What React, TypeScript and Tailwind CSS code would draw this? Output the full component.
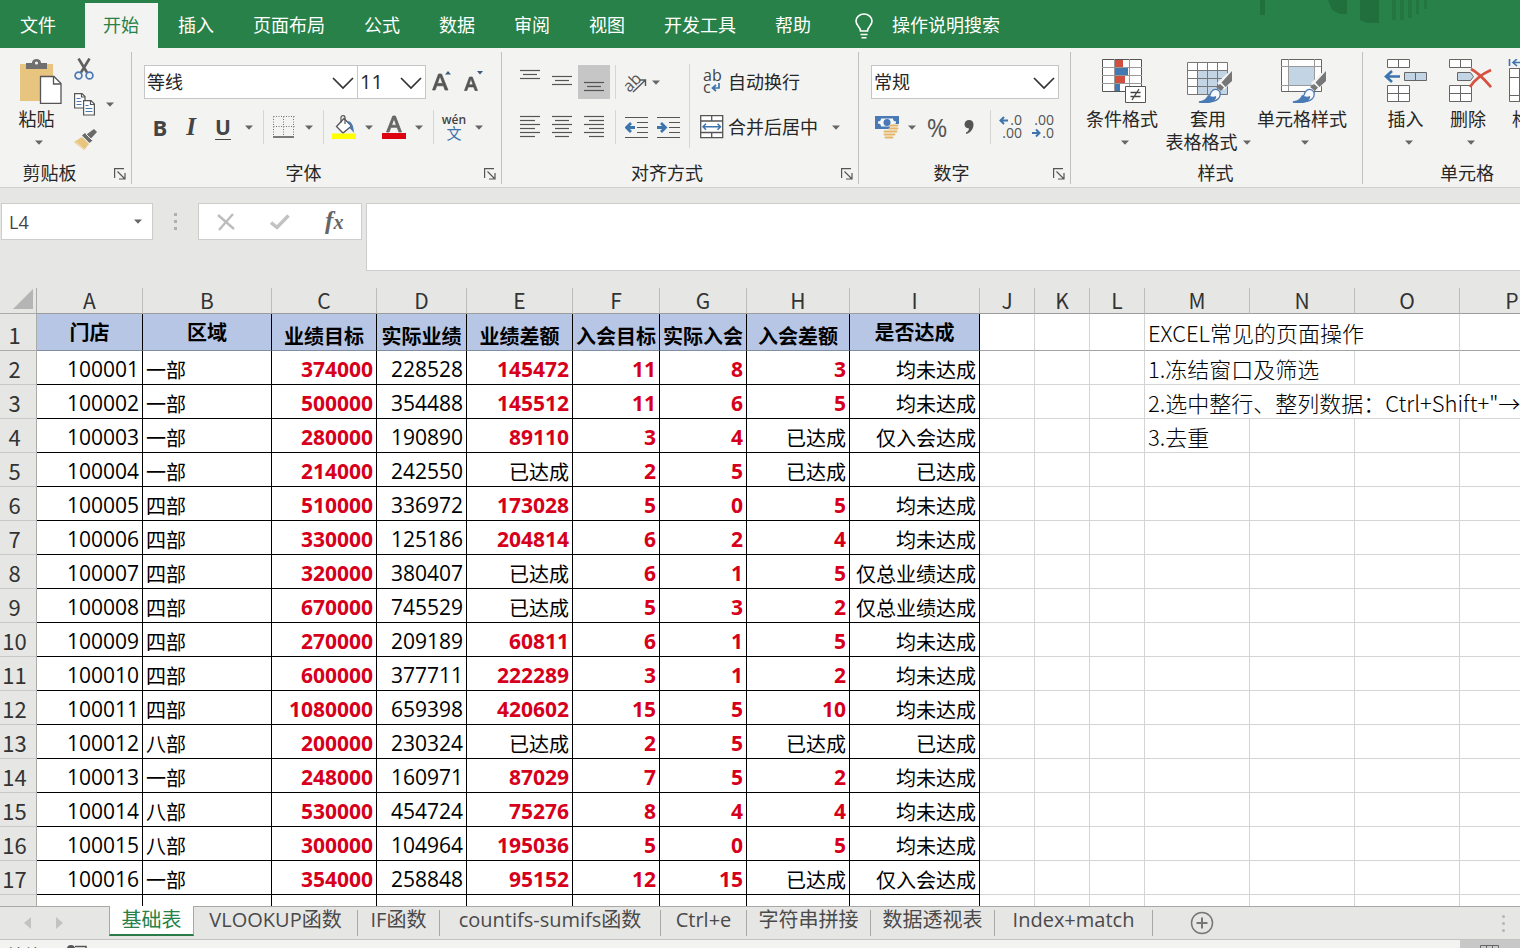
import React from "react";

const UI = "font-['Open_Sans','Noto_Sans_CJK_SC',sans-serif]";
const HEADING = "font-['Noto_Sans_CJK_SC',sans-serif] font-normal";
const LIGHT = "font-['Noto_Sans_CJK_SC',sans-serif] font-light";

function Caret({ className = "" }: { className?: string }) {
  return (
    <svg width="8" height="5" viewBox="0 0 8 5" className={"shrink-0 " + className} aria-hidden="true">
      <path d="M0 0.5h8L4 4.8z" fill="#666" />
    </svg>
  );
}

function CaretButton({ label }: { label: string }) {
  return (
    <button aria-label={label} className="flex h-8 w-[18px] items-center justify-center">
      <Caret />
    </button>
  );
}

function Tool({ label, active, children }: { label: string; active?: boolean; children: React.ReactNode }) {
  return (
    <button aria-label={label} className={"flex h-[34px] w-8 shrink-0 items-center justify-center " + (active ? "bg-[#c6c6c6]" : "")}>
      {children}
    </button>
  );
}

function Sep() {
  return (
    <span className="flex w-[10px] shrink-0 justify-center self-stretch">
      <span className="w-px bg-[#d6d6d6]" />
    </span>
  );
}

function Launcher({ label }: { label: string }) {
  return (
    <button aria-label={label} className="absolute right-[5px] bottom-1">
      <svg width="12" height="12" viewBox="0 0 12 12" fill="none" stroke="#555" strokeWidth="1.2">
        <path d="M0.6 10V0.6H10M3.5 3.5l7 7M11 5v6H5" />
      </svg>
    </button>
  );
}

function Group({ title, width, titlePad = "", launcher, last, children }: { title: string; width: string; titlePad?: string; launcher?: boolean; last?: boolean; children: React.ReactNode }) {
  return (
    <section aria-label={title} className={"relative mt-1 mb-[3px] flex shrink-0 flex-col " + width + (last ? "" : " border-r border-[#c0c0c0]")}>
      <div className="flex h-[108px] items-start">{children}</div>
      <div className={"h-6 text-center leading-[26px] " + titlePad}>{title}</div>
      {launcher && <Launcher label={title + "设置"} />}
    </section>
  );
}

function Combo({ label, value, width }: { label: string; value: string; width: string }) {
  return (
    <label className={"relative block h-[34px] border border-[#c6c6c6] bg-white " + width}>
      <select aria-label={label} defaultValue={value} className="h-full w-full appearance-none bg-transparent pl-[2px] outline-none">
        <option>{value}</option>
      </select>
      <svg width="22" height="13" viewBox="0 0 22 13" className="pointer-events-none absolute top-[11px] right-[3px]" fill="none" stroke="#333" strokeWidth="1.7">
        <path d="M1 1l10 10L21 1" />
      </svg>
    </label>
  );
}

function BigButton({ label, second, width, children }: { label: string; second?: string; width: string; children: React.ReactNode }) {
  return (
    <button className={"flex shrink-0 flex-col items-center pt-[7px] leading-[23px] " + width}>
      {children}
      <span className="mt-1 whitespace-nowrap">{label}</span>
      <span className={"flex h-[23px] items-center gap-[5px] whitespace-nowrap " + (second ? "" : "pl-[6px]")}>
        {second && <span>{second}</span>}
        <Caret />
      </span>
    </button>
  );
}

function Lines({ rows }: { rows: [number, number, number][] }) {
  return (
    <svg width="22" height="26" viewBox="0 0 22 26" stroke="#555" strokeWidth="1.2" aria-hidden="true">
      {rows.map(([x1, x2, y]) => (
        <path key={y} d={`M${x1} ${y + 0.5}H${x2}`} />
      ))}
    </svg>
  );
}

const Paste = () => (
  <svg width="42" height="45" viewBox="0 0 42 45">
    <path d="M0 5h33v37H0z" fill="#e8c57f" />
    <path d="M6 10V4h6c0-3 2-4 4.500-4S21 1 21 4h6v6z" fill="#6f6f6f" />
    <circle cx="16.500" cy="4" r="1.600" fill="#f3f3f2" />
    <path d="M20.500 17.500H34l7 7v20H20.500z" fill="#fff" stroke="#555" strokeWidth="1.300" />
    <path d="M33.500 17.500v7.500H41" fill="none" stroke="#555" strokeWidth="1.300" />
  </svg>
);

const Scissors = () => (
  <svg width="20" height="22" viewBox="0 0 20 22" fill="none">
    <path d="M4.500 0.500l8.500 14M15.500 0.500L7 14.500" stroke="#606060" strokeWidth="2.600" />
    <circle cx="4.500" cy="17.500" r="3.400" stroke="#4a7ab5" strokeWidth="1.700" />
    <circle cx="15.500" cy="17.500" r="3.400" stroke="#4a7ab5" strokeWidth="1.700" />
  </svg>
);

const Copy = () => (
  <svg width="21" height="23" viewBox="0 0 21 23" fill="#fff" stroke="#555" strokeWidth="1.200">
    <path d="M0.600 0.600H8l3 3V15H0.600z" />
    <path d="M9.600 7.600H17l3.400 3.400V22H9.600z" />
    <path d="M7.500 0.600V4H11M16.500 7.600V11.500h4" fill="none" />
    <path d="M2.500 5.500h4M2.500 8.500h5M2.500 11.500h5M11.500 12.500h3M11.500 15.500h7M11.500 18.500h7" stroke="#4a7ab5" />
  </svg>
);

const FormatBrush = () => (
  <svg width="23" height="21" viewBox="0 0 23 21">
    <path d="M0 13l8-5 7 7-5 6z" fill="#e8c57f" />
    <path d="M2 13l8 7" stroke="#f3e2bd" strokeWidth="1" />
    <path d="M8 6.500l3-2.500 7.500 7.500-3 2.500z" fill="#6a6a6a" />
    <path d="M12.500 5.500L20 0l3 3-6.500 7z" fill="#6a6a6a" />
    <path d="M12 5l6 6" stroke="#f3f3f2" strokeWidth="1" />
  </svg>
);

const Borders = () => (
  <svg width="22" height="22" viewBox="0 0 22 22" fill="none" stroke="#777">
    <path d="M0.500 0.500h21M0.500 10.500h21M0.500 0.500v20M10.500 0.500v20M20.500 0.500v20" strokeDasharray="1 1.500" />
    <path d="M0 21h21" stroke="#444" strokeWidth="1.400" />
  </svg>
);

const Fill = () => (
  <svg width="24" height="24" viewBox="0 0 24 24" fill="none">
    <path d="M12 3.500l7.500 7.500-8.500 7-6.500-6.500z" fill="#fff" stroke="#555" strokeWidth="1.300" />
    <path d="M9 7.500V2.500c0-2.500 4-2.500 4 0V9" stroke="#555" strokeWidth="1.200" />
    <path d="M15 6c4 0 6.500 3 7 12-1-2-3-3-4.500-5l1.500-2z" fill="#4a7ab5" />
    <path d="M0 18.500h24V24H0z" fill="#ffff00" />
  </svg>
);

const FontColor = () => (
  <svg width="24" height="24" viewBox="0 0 24 24">
    <path d="M4.500 17L10.800 1h2.600L19.500 17h-2.600l-1.700-4.700H8.800L7.100 17zM9.600 10.200h4.800L12 3.500z" fill="#666" stroke="#666" strokeWidth="0.800" />
    <path d="M0 18h24v6H0z" fill="#dd0010" />
  </svg>
);

const Indent = ({ right }: { right?: boolean }) => (
  <svg width="23" height="23" viewBox="0 0 23 23" stroke="#555" strokeWidth="1.200" fill="none">
    <path d="M0 1.500h23M12 6.500h11M12 11.500h11M12 16.500h11M0 21.500h23" />
    <path d={right ? "M0 11.500h8M4 7l4.500 4.500L4 16" : "M10 11.500H2M6 7l-4.500 4.500L6 16"} stroke="#3c74ad" strokeWidth="2.800" />
  </svg>
);

const Orientation = () => (
  <svg width="22" height="22" viewBox="0 0 22 22" className="overflow-visible">
    <text x="-2" y="17" fontSize="16" fill="#555" transform="rotate(-45 7 12)" fontFamily="Open Sans">ab</text>
    <path d="M8 21L20 9.500M14.500 9H20.500V15" fill="none" stroke="#555" strokeWidth="1.400" />
  </svg>
);

const Merge = () => (
  <svg width="24" height="24" viewBox="0 0 24 24" fill="#fff" stroke="#555" strokeWidth="1.300">
    <path d="M0.700 0.700h22v22h-22zM0.700 6h22M0.700 17.500h22M11.700 0.700V6M11.700 17.500v5" />
    <path d="M3 11.700h17.500M6 8.700l-3 3 3 3M17.500 8.700l3 3-3 3" fill="none" stroke="#3c74ad" strokeWidth="1.500" />
  </svg>
);

const Money = () => (
  <svg width="24" height="24" viewBox="0 0 24 24">
    <path d="M0 1h24v13H0z" fill="#4a7ab5" />
    <path d="M6 3.500h12c0 2 1 3 3 3v2c-2 0-3 1-3 3H6c0-2-1-3-3-3v-2c2 0 3-1 3-3z" fill="#f3f6fa" />
    <circle cx="12" cy="7.500" r="3.500" fill="#4a7ab5" />
    <path d="M15 9h9v13H9v-6h6z" fill="#f3f3f2" />
    <path d="M15.500 10.500h7M14.500 13.500h8M9.500 16.500h12M9.500 19.500h10M10.500 22.500h7" stroke="#e6b566" strokeWidth="1.800" strokeLinecap="round" />
  </svg>
);

const Decimals = ({ decrease }: { decrease?: boolean }) => (
  <svg width="24" height="26" viewBox="0 0 24 26" className="overflow-visible" fontFamily="Open Sans" fontSize="14" fill="#555">
    <text x="23" y="11" textAnchor="end">{decrease ? ".00" : ".0"}</text>
    <text x="23" y="24" textAnchor="end">{decrease ? ".0" : ".00"}</text>
    <path d={decrease ? "M1 19h7M5 15.500L8.500 19 5 22.500" : "M9 6.500H2M5 3L1.500 6.500 5 10"} fill="none" stroke="#3c74ad" strokeWidth="2" />
  </svg>
);

const Brush = () => (
  <>
    <path d="M46 9v12L37 31l-7-7z" fill="#f3f3f2" />
    <path d="M45 12v10l-6.500 6-4-4.500zM33 25l4 3.500-3 3.500-5-4z" fill="#777" />
    <path d="M23 36c1-4 4-7 8-5 3 2 3 6 0 9-4 4-12 3-19 3 5-1 9-3 11-7z" fill="#f7f9fb" stroke="#4a7ab5" strokeWidth="1.300" />
    <path d="M21 36c3 2 6 2 8 1 1 3-3 7-8 7H11c5-1 8-4 10-8z" fill="#4a7ab5" />
  </>
);

const Conditional = () => (
  <svg width="44" height="45" viewBox="0 0 44 45" className="ml-[3px]">
    <path d="M0.500 0.500h39v32h-39z" fill="#fff" stroke="#555" />
    <path d="M0 8.500h40M0 16.500h40M0 24.500h40M12.500 0v32M27.500 0v32" stroke="#999" />
    <path d="M13 1h8v7h-8zM13 17h10v7H13z" fill="#d04f3f" />
    <path d="M13 9h13v7H13zM13 25h5v7h-5z" fill="#4478b0" />
    <path d="M23.500 27.500h20v16h-20z" fill="#fff" stroke="#555" />
    <path d="M28.500 33.500h10M28.500 37.500h10M37 30l-7 11" fill="none" stroke="#444" strokeWidth="1.300" />
  </svg>
);

const TableFormat = () => (
  <svg width="46" height="45" viewBox="0 0 46 45" className="ml-[3px]">
    <path d="M0.500 3.500h40v32h-40z" fill="#fff" />
    <path d="M10 11h31v24H10z" fill="#c3d5e5" />
    <path d="M0.500 3.500h40v32h-40zM0 11.500h40M0 19.500h40M0 27.500h40M10.500 3v32M20.500 3v32M30.500 3v32" fill="none" stroke="#777" />
    <Brush />
  </svg>
);

const CellStyle = () => (
  <svg width="46" height="45" viewBox="0 0 46 45" className="ml-[3px]">
    <path d="M0.500 0.500h40v32h-40z" fill="#fff" stroke="#666" />
    <path d="M0 7.500h40M0 26.500h40M7.500 0v32M33.500 0v32" stroke="#999" />
    <path d="M8 8h25v18H8z" fill="#c3d5e5" />
    <Brush />
  </svg>
);

const InsertCells = () => (
  <svg width="44" height="45" viewBox="0 0 44 45" fill="#fff" stroke="#666" className="mr-[2px]">
    <path d="M4.500 0.500h22v8h-22zM15.500 0v8M4.500 26.500h22v16h-22zM15.500 26v16M4.500 34.500h22" />
    <path d="M21.500 13.500h22v8h-22zM32.500 13v8" fill="#c3d5e5" />
    <path d="M17 17.500H3M9 12l-6 5.500L9 23" fill="none" stroke="#3c74ad" strokeWidth="2.600" />
  </svg>
);

const DeleteCells = () => (
  <svg width="44" height="45" viewBox="0 0 44 45" fill="#fff" stroke="#666" className="ml-[3px]">
    <path d="M1.500 0.500h22v8h-22zM12.500 0v8M1.500 26.500h22v16h-22zM12.500 26v16M1.500 34.500h22" />
    <path d="M9.500 13.500h13l3 4-3 4h-13z" fill="#c3d5e5" />
    <path d="M23 10c8 4 13 10 20 18M43 11c-9 4-16 9-21 17" fill="none" stroke="#d65240" strokeWidth="2.800" />
  </svg>
);

const FormatCells = () => (
  <svg width="44" height="45" viewBox="0 0 44 45" fill="#fff" stroke="#666">
    <path d="M1.500 9.500h40v33h-40zM1.500 18.500h40M1.500 36.500h40M11.500 9v33M31.500 9v33" />
    <path d="M1.500 0v7M41.500 0v7M36 3.500H5M9 0L5 3.500 9 7" fill="none" stroke="#3c74ad" strokeWidth="1.600" />
  </svg>
);

const ribbonTabs = ["插入", "页面布局", "公式", "数据", "审阅", "视图", "开发工具", "帮助"];

const columns: [string, string][] = [
  ["A", "w-[106px]"], ["B", "w-[129px]"], ["C", "w-[105px]"], ["D", "w-[90px]"], ["E", "w-[106px]"],
  ["F", "w-[87px]"], ["G", "w-[87px]"], ["H", "w-[103px]"], ["I", "w-[130px]"], ["J", "w-[55px]"],
  ["K", "w-[55px]"], ["L", "w-[55px]"], ["M", "w-[105px]"], ["N", "w-[105px]"], ["O", "w-[105px]"], ["P", ""],
];

const headings = ["门店", "区域", "业绩目标", "实际业绩", "业绩差额", "入会目标", "实际入会", "入会差额", "是否达成"];

const rows: string[][] = [
  ["100001", "一部", "374000", "228528", "145472", "11", "8", "3", "均未达成"],
  ["100002", "一部", "500000", "354488", "145512", "11", "6", "5", "均未达成"],
  ["100003", "一部", "280000", "190890", "89110", "3", "4", "已达成", "仅入会达成"],
  ["100004", "一部", "214000", "242550", "已达成", "2", "5", "已达成", "已达成"],
  ["100005", "四部", "510000", "336972", "173028", "5", "0", "5", "均未达成"],
  ["100006", "四部", "330000", "125186", "204814", "6", "2", "4", "均未达成"],
  ["100007", "四部", "320000", "380407", "已达成", "6", "1", "5", "仅总业绩达成"],
  ["100008", "四部", "670000", "745529", "已达成", "5", "3", "2", "仅总业绩达成"],
  ["100009", "四部", "270000", "209189", "60811", "6", "1", "5", "均未达成"],
  ["100010", "四部", "600000", "377711", "222289", "3", "1", "2", "均未达成"],
  ["100011", "四部", "1080000", "659398", "420602", "15", "5", "10", "均未达成"],
  ["100012", "八部", "200000", "230324", "已达成", "2", "5", "已达成", "已达成"],
  ["100013", "一部", "248000", "160971", "87029", "7", "5", "2", "均未达成"],
  ["100014", "八部", "530000", "454724", "75276", "8", "4", "4", "均未达成"],
  ["100015", "八部", "300000", "104964", "195036", "5", "0", "5", "均未达成"],
  ["100016", "一部", "354000", "258848", "95152", "12", "15", "已达成", "仅入会达成"],
  ["100017", "一部", "220000", "251036", "已达成", "6", "3", "3", "仅总业绩达成"],
];

type Note = { text: string; span: number };

const notes: Record<number, Note> = {
  1: { text: "EXCEL常见的页面操作", span: 3 },
  2: { text: "1.冻结窗口及筛选", span: 2 },
  3: { text: '2.选中整行、整列数据：Ctrl+Shift+"→', span: 4 },
  4: { text: "3.去重", span: 1 },
};

const sheets: [string, string][] = [
  ["VLOOKUP函数", "w-[164px]"], ["IF函数", "w-[82px]"], ["countifs-sumifs函数", "w-[221px]"], ["Ctrl+e", "w-[86px]"],
  ["字符串拼接", "w-[124px]"], ["数据透视表", "w-[124px]"], ["Index+match", "w-[158px]"],
];

const isNumber = (v: string) => /^\d+$/.test(v);

function EmptyCells({ from, line }: { from: number; line: string }) {
  return (
    <>
      {columns.slice(from).map(([name]) => (
        <td key={name} className={"border-r border-b border-r-[#d4d4d4] " + line} />
      ))}
    </>
  );
}

function NoteCells({ note, line, align = "align-bottom" }: { note?: Note; line: string; align?: string }) {
  if (!note) return <EmptyCells from={9} line={line} />;
  return (
    <>
      {["J", "K", "L"].map((name) => (
        <td key={name} className={"border-r border-b border-r-[#d4d4d4] " + line} />
      ))}
      <td colSpan={note.span} className={"overflow-hidden border-r border-b border-r-[#d4d4d4] py-0 pr-0 pl-[3px] text-[22px] leading-[32px] whitespace-nowrap " + align + " " + LIGHT + " " + line}>
        {note.text}
      </td>
      <EmptyCells from={12 + note.span} line={line} />
    </>
  );
}

function RowNumber({ n, line }: { n: number; line: string }) {
  return (
    <th scope="row" className={"border-r border-b border-r-[#a9aca8] bg-[#e6e6e5] py-0 pr-[7px] pl-0 text-center align-bottom text-[22px] leading-[31px] text-[#333] " + HEADING + " " + line}>
      {n}
    </th>
  );
}

function Sheet() {
  return (
    <table className="w-full min-w-[1565px] table-fixed border-separate border-spacing-0 bg-white text-black">
      <colgroup>
        <col className="w-[37px]" />
        {columns.map(([name, width]) => (
          <col key={name} className={width} />
        ))}
      </colgroup>
      <thead>
        <tr className="h-[26px] bg-[#e6e6e5]">
          <th aria-label="全选" className="border-r border-b border-[#a9aca8] p-0 align-bottom">
            <svg width="20" height="20" viewBox="0 0 20 20" className="mb-1 ml-[13px]">
              <path d="M20 0v20H0z" fill="#b5b5b5" />
            </svg>
          </th>
          {columns.map(([name]) => (
            <th key={name} scope="col" className={"border-r border-b border-r-[#bcbcbc] border-b-[#9a9d9a] p-0 text-[21px] leading-[25px] text-[#333] " + HEADING}>
              {name}
            </th>
          ))}
        </tr>
      </thead>
      <tbody>
        <tr className="h-[37px]">
          <RowNumber n={1} line="border-b-[#a9aca8]" />
          {headings.map((h, i) => (
            <th key={h} className={"border-r border-b border-r-black border-b-[#7f8fa0] bg-[#b7c6e4] p-0 text-[20px] leading-[27px] font-bold whitespace-nowrap " + (i < 2 || i === 8 ? "align-middle" : "align-bottom")}>
              {h}
            </th>
          ))}
          <NoteCells note={notes[1]} line="border-b-[#a3a3a3]" align="align-middle" />
        </tr>
        {rows.map((row, r) => (
          <tr key={row[0]} className={r === 16 ? "h-[37px]" : "h-[34px]"}>
            <RowNumber n={r + 2} line="border-b-[#c9c9c9]" />
            {row.map((v, c) => (
              <td
                key={c}
                className={
                  "border-r border-b border-black px-[3px] py-0 align-bottom whitespace-nowrap " +
                  (c === 1 ? "text-left " : "text-right ") +
                  (isNumber(v) ? "text-[21px] leading-[30px] " : "text-[20px] leading-[26px] ") +
                  ((c === 2 || (c >= 4 && c <= 7)) && isNumber(v) ? "font-bold text-[#d6001c]" : "")
                }
              >
                {v}
              </td>
            ))}
            <NoteCells note={notes[r + 2]} line="border-b-[#d4d4d4]" />
          </tr>
        ))}
      </tbody>
    </table>
  );
}

export default function App() {
  return (
    <div className={"flex h-screen flex-col overflow-hidden bg-[#e6e6e5] text-[18px] text-[#262626] " + UI}>
      <header className="relative flex h-12 shrink-0 items-end gap-px overflow-hidden bg-[#278148] text-white">
        <button className="h-[45px] pr-[28px] pl-5">文件</button>
        <button className="h-[45px] bg-[#f3f3f2] pr-[19px] pl-[18px] text-[#278148]">开始</button>
        {ribbonTabs.map((t) => (
          <button key={t} className="h-[45px] px-[19px] whitespace-nowrap">{t}</button>
        ))}
        <label className="ml-6 flex h-[45px] items-center gap-[19px]">
          <svg width="18" height="26" viewBox="0 0 18 26" fill="none" stroke="#fff" strokeWidth="1.600">
            <path d="M5.500 18c0-4-4.500-5-4.500-10a8 7 0 0 1 16 0c0 5-4.500 6-4.500 10zM5.500 21.500h7M6.500 24.800h5" />
          </svg>
          <input aria-label="操作说明搜索" placeholder="操作说明搜索" className="w-40 bg-transparent outline-none placeholder:text-white placeholder:opacity-100" />
        </label>
        <svg width="190" height="26" viewBox="0 0 190 26" className="absolute top-0 left-[1250px]" fill="#226f3e" aria-hidden="true">
          <path d="M10 0h5v15h-5zM78 0h19v14h-7l-8-4zM110 0h19v23h-12l-7-3z" />
          <path d="M142 0h4v20h-4zM150 0h4v20h-4zM158 0h4v18h-4zM166 0h3v14h-3zM174 0h3v9h-3z" opacity="0.6" />
        </svg>
      </header>

      <div className="flex h-[140px] shrink-0 overflow-hidden border-b border-[#cfcfcf] bg-[#f3f3f2]">
        <Group title="剪贴板" width="w-[132px] pr-8" launcher>
          <button className="ml-[19px] flex w-[43px] flex-col items-center pt-[7px] leading-[23px]">
            <Paste />
            <span className="mt-1 mr-2 whitespace-nowrap">粘贴</span>
            <span className="flex h-[23px] items-center pr-1"><Caret /></span>
          </button>
          <div className="ml-3 flex shrink-0 flex-col gap-[13px] pt-[6px]">
            <button aria-label="剪切"><Scissors /></button>
            <span className="flex items-center gap-[11px]">
              <button aria-label="复制"><Copy /></button>
              <button aria-label="复制选项"><Caret /></button>
            </span>
            <button aria-label="格式刷"><FormatBrush /></button>
          </div>
        </Group>

        <Group title="字体" width="w-[370px] pr-[26px] pl-3" titlePad="pr-3" launcher>
          <div className="flex flex-col">
            <div className="mt-[13px] flex items-center">
              <Combo label="字体" value="等线" width="w-[214px]" />
              <Combo label="字号" value="11" width="w-[69px] -ml-px text-[20px]" />
              <button aria-label="增大字号" className="flex h-[34px] w-8 items-center justify-center">
                <svg width="20" height="24" viewBox="0 0 20 24">
                  <path d="M0.500 20L6.500 4h3L16 20h-3l-1.500-4.200H4.700L3.200 20zM5.500 13.400h5.200L8 6z" fill="#555" stroke="#555" strokeWidth="0.700" />
                  <path d="M13 4.500h6L16 1z" fill="#3c5a80" />
                </svg>
              </button>
              <button aria-label="减小字号" className="flex h-[34px] w-8 items-center justify-center">
                <svg width="20" height="24" viewBox="0 0 20 24">
                  <path d="M0.500 20.500L5.500 7h2.800L13.500 20.500H11l-1.300-3.600H4.200L2.900 20.500zM4.900 14.800H9L7 8.700z" fill="#555" stroke="#555" strokeWidth="0.700" />
                  <path d="M13 1h6l-3 3.500z" fill="#3c5a80" />
                </svg>
              </button>
            </div>
            <div className="mt-[11px] flex h-[34px] items-center text-[#444]">
              <button aria-label="加粗" className="w-8 text-[22px] leading-[30px] font-bold">B</button>
              <button aria-label="倾斜" className="w-[30px] font-['Liberation_Serif',serif] text-[25px] leading-[30px] font-bold italic">I</button>
              <button aria-label="下划线" className="w-[34px] text-[21px] leading-[30px] font-bold underline decoration-1 underline-offset-4">U</button>
              <CaretButton label="下划线选项" />
              <Sep />
              <Tool label="边框"><Borders /></Tool>
              <CaretButton label="边框选项" />
              <Sep />
              <Tool label="填充颜色"><Fill /></Tool>
              <CaretButton label="填充颜色选项" />
              <Tool label="字体颜色"><FontColor /></Tool>
              <CaretButton label="字体颜色选项" />
              <Sep />
              <button aria-label="拼音" className="flex w-8 flex-col items-center">
                <span className="text-[12px] leading-[12px] font-semibold">wén</span>
                <span className="text-[15px] leading-[14px] text-[#3c74ad]">文</span>
              </button>
              <CaretButton label="拼音选项" />
            </div>
          </div>
        </Group>

        <Group title="对齐方式" width="w-[357px] pr-[26px] pl-3" titlePad="pr-3" launcher>
          <div className="flex shrink-0 flex-col">
            <div className="mt-[13px] flex h-[34px] items-center">
              <Tool label="顶端对齐"><Lines rows={[[1, 21, 1], [4, 18, 5], [1, 21, 9]]} /></Tool>
              <Tool label="垂直居中"><Lines rows={[[1, 21, 7], [4, 18, 11], [1, 21, 15]]} /></Tool>
              <Tool label="底端对齐" active><Lines rows={[[1, 21, 13], [4, 18, 17], [1, 21, 21]]} /></Tool>
              <Sep />
              <Tool label="方向"><Orientation /></Tool>
              <button aria-label="方向选项" className="w-[10px]"><Caret /></button>
            </div>
            <div className="mt-[11px] flex h-[34px] items-center">
              <Tool label="左对齐"><Lines rows={[[1, 21, 2], [1, 16, 6], [1, 21, 10], [1, 16, 14], [1, 21, 18], [1, 16, 22]]} /></Tool>
              <Tool label="居中"><Lines rows={[[1, 21, 2], [4, 18, 6], [1, 21, 10], [4, 18, 14], [1, 21, 18], [4, 18, 22]]} /></Tool>
              <Tool label="右对齐"><Lines rows={[[1, 21, 2], [6, 21, 6], [1, 21, 10], [6, 21, 14], [1, 21, 18], [6, 21, 22]]} /></Tool>
              <Sep />
              <Tool label="减少缩进量"><Indent /></Tool>
              <Tool label="增加缩进量"><Indent right /></Tool>
            </div>
          </div>
          <div className="mt-3 flex h-[84px]"><Sep /></div>
          <div className="flex shrink-0 flex-col pl-[6px]">
            <button className="mt-[13px] flex h-[34px] items-center gap-1">
              <svg width="24" height="26" viewBox="0 0 24 26" fontFamily="Open Sans" fontSize="16" fill="#444" className="overflow-visible" aria-hidden="true">
                <text x="3" y="12">ab</text>
                <text x="3" y="24">c</text>
                <path d="M19 14v5h-6M16 16l-3.500 3 3.500 3" fill="none" stroke="#3c74ad" strokeWidth="1.700" />
              </svg>
              <span className="whitespace-nowrap">自动换行</span>
            </button>
            <span className="mt-[11px] flex h-[34px] items-center">
              <button className="flex items-center gap-1 whitespace-nowrap"><Merge />合并后居中</button>
              <button aria-label="合并选项" className="ml-[14px]"><Caret /></button>
            </span>
          </div>
        </Group>

        <Group title="数字" width="w-[212px] pr-[26px] pl-3" titlePad="pr-3" launcher>
          <div className="flex flex-col">
            <div className="mt-[13px] flex">
              <Combo label="数字格式" value="常规" width="w-[188px]" />
            </div>
            <div className="mt-[11px] flex h-[34px] items-center text-[#555]">
              <Tool label="会计数字格式"><Money /></Tool>
              <CaretButton label="会计格式选项" />
              <button aria-label="百分比样式" className="w-8 text-[25px] leading-[30px]">%</button>
              <Tool label="千位分隔样式">
                <svg width="10" height="16" viewBox="0 0 10 16"><path d="M5 1c3 0 4.500 2 4.500 4.500C9.500 10 6.500 14 2 15v-1.500c2-1 3-2.500 3-4C2 9.500 0.500 7.500 0.500 5.300 0.500 3 2.500 1 5 1z" fill="#555" /></svg>
              </Tool>
              <Sep />
              <Tool label="增加小数位数"><Decimals /></Tool>
              <Tool label="减少小数位数"><Decimals decrease /></Tool>
            </div>
          </div>
        </Group>

        <Group title="样式" width="w-[292px] pl-2" titlePad="pr-[10px]">
          <BigButton label="条件格式" width="w-[86px]"><Conditional /></BigButton>
          <BigButton label="套用" second="表格格式" width="w-[86px]"><TableFormat /></BigButton>
          <BigButton label="单元格样式" width="w-[102px]"><CellStyle /></BigButton>
        </Group>

        <Group title="单元格" width="w-[210px] px-[11px]" titlePad="pr-[2px]" last>
          <BigButton label="插入" width="w-[63px]"><InsertCells /></BigButton>
          <BigButton label="删除" width="w-[62px]"><DeleteCells /></BigButton>
          <BigButton label="格式" width="w-[62px]"><FormatCells /></BigButton>
        </Group>
      </div>

      <div className="flex shrink-0 items-start pt-[15px] pb-[17px]">
        <label className="relative ml-px block h-[37px] w-[152px] border border-[#cdcdcd] bg-white">
          <input aria-label="名称框" defaultValue="L4" className="h-full w-full bg-transparent pl-[7px] text-[#444] outline-none" />
          <Caret className="absolute top-[15px] right-[10px]" />
        </label>
        <span className="flex h-[36px] w-[45px] flex-col items-center justify-center gap-1" aria-hidden="true">
          <span className="size-[3px] bg-[#b0b0b0]" />
          <span className="size-[3px] bg-[#b0b0b0]" />
          <span className="size-[3px] bg-[#b0b0b0]" />
        </span>
        <div className="flex h-[37px] w-[164px] items-center justify-around border border-[#cdcdcd] bg-white">
          <button aria-label="取消">
            <svg width="18" height="18" viewBox="0 0 18 18" stroke="#bdbdbd" strokeWidth="2.400"><path d="M1 2l16 14M16 1L2 17" /></svg>
          </button>
          <button aria-label="输入">
            <svg width="20" height="16" viewBox="0 0 20 16" fill="none" stroke="#c2c2c2" strokeWidth="3.400"><path d="M1 8.500l6 5L18.500 1.500" /></svg>
          </button>
          <button aria-label="插入函数" className="font-['Liberation_Serif',serif] text-[25px] leading-8 font-bold text-[#666] italic">
            f<span className="text-[20px]">x</span>
          </button>
        </div>
        <textarea aria-label="编辑栏" className="ml-1 block h-[68px] min-w-0 flex-1 resize-none border border-r-0 border-[#cdcdcd] bg-white outline-none" />
      </div>

      <main className="min-h-0 flex-1 overflow-hidden bg-white">
        <Sheet />
      </main>

      <nav className="flex h-[33px] shrink-0 items-start border-t border-[#a8a8a8] text-[20px] text-[#4a4a4a]">
        <div className="flex w-[109px] items-center gap-[25px] pt-[10px] pl-6">
          <button aria-label="上一个"><svg width="7" height="12" viewBox="0 0 7 12"><path d="M7 0v12L0 6z" fill="#c3c3c3" /></svg></button>
          <button aria-label="下一个"><svg width="7" height="12" viewBox="0 0 7 12"><path d="M0 0v12l7-6z" fill="#c3c3c3" /></svg></button>
        </div>
        <button className="-mt-px h-[30px] w-[85px] border-x border-b-2 border-x-[#a8a8a8] border-b-[#2a7a4a] bg-white leading-[28px] text-[#278148]">基础表</button>
        {sheets.map(([name, width]) => (
          <button key={name} className={"flex h-[29px] shrink-0 items-start " + width}>
            <span className="min-w-0 flex-1 text-center leading-[26px] whitespace-nowrap">{name}</span>
            <span className="h-[26px] w-px self-end bg-[#a8a8a8]" />
          </button>
        ))}
        <button aria-label="新工作表" className="mt-[4px] ml-[37px]">
          <svg width="24" height="24" viewBox="0 0 24 24" fill="none" stroke="#777" strokeWidth="1.500">
            <circle cx="12" cy="12" r="10.500" />
            <path d="M12 6.500v11M6.500 12h11" strokeWidth="2" />
          </svg>
        </button>
        <span className="mt-2 mr-[15px] ml-auto flex flex-col gap-1" aria-hidden="true">
          <span className="size-[3px] rounded-full bg-[#b5b5b5]" />
          <span className="size-[3px] rounded-full bg-[#b5b5b5]" />
          <span className="size-[3px] rounded-full bg-[#b5b5b5]" />
        </span>
      </nav>

      <footer className="flex h-[9px] shrink-0 items-start overflow-hidden border-t border-[#c2c2c2] bg-[#f3f3f2]">
        <span className="mt-1 pl-[6px] leading-6">就绪</span>
        <svg width="22" height="16" viewBox="0 0 22 16" className="mt-[5px] ml-6">
          <path d="M9 1.500h11v12H5" fill="none" stroke="#555" strokeWidth="1.500" />
          <circle cx="5" cy="4" r="4" fill="#555" />
        </svg>
        <button aria-label="普通视图" className="ml-auto flex h-6 w-[60px] justify-center bg-[#c8c8c8] pt-[5px]">
          <svg width="20" height="16" viewBox="0 0 20 16" fill="none" stroke="#666"><path d="M0.500 0.500h18v15h-18zM6.500 0.500v15M12.500 0.500v15M0.500 5.500h18" /></svg>
        </button>
      </footer>
    </div>
  );
}
